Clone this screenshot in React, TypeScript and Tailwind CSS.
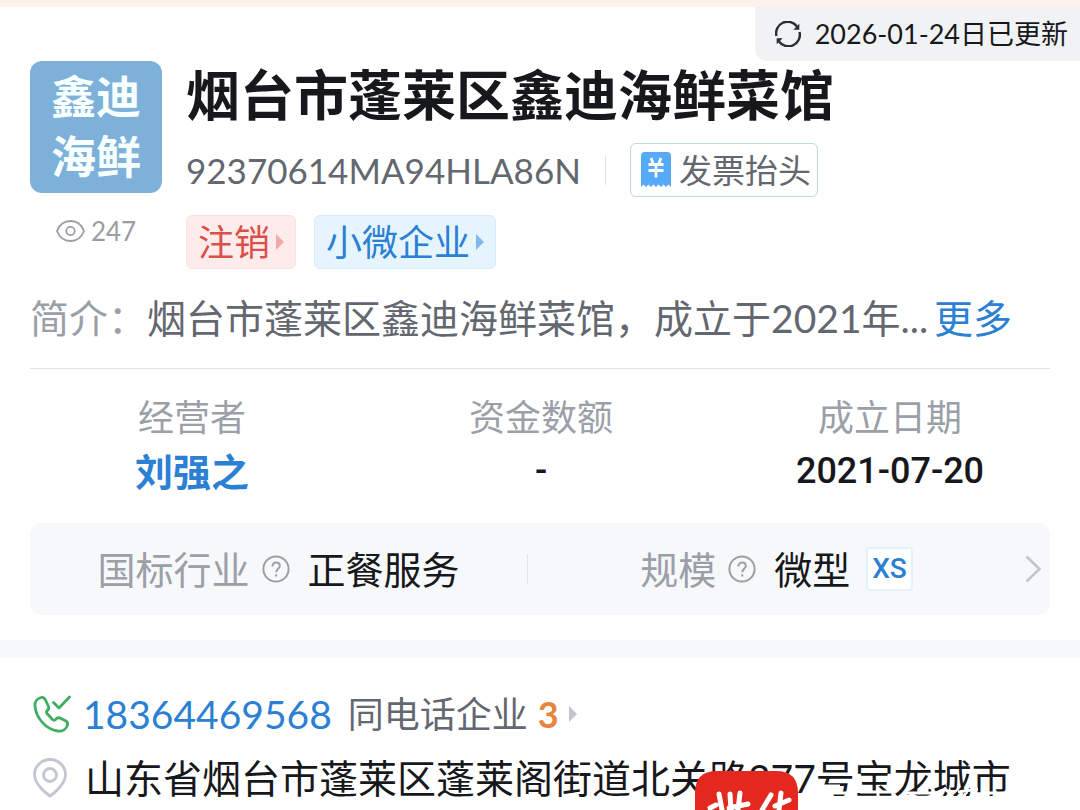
const Arrow = ({ className }: { className: string }) => (
  <svg viewBox="0 0 8 16" className={className} fill="currentColor" aria-hidden="true">
    <path d="M0 0L8 8L0 16Z" />
  </svg>
)

const Help = ({ label }: { label: string }) => (
  <button type="button" aria-label={label} className="text-[#9b9fa8]">
    <svg viewBox="0 0 28 28" className="h-7 w-7" fill="none" stroke="currentColor" strokeWidth="2">
      <circle cx="14" cy="14" r="12.6" />
      <path d="M10.4 11.4C10.4 9 12 7.6 14.1 7.6C16.3 7.6 17.8 9 17.8 11C17.8 13.7 14.2 14 14.2 17.3" />
      <path d="M14.2 19.3V21.5" />
    </svg>
  </button>
)

const Refresh = () => (
  <svg viewBox="0 0 26 26" className="h-[26px] w-[26px]" fill="none" stroke="#2b2d30" strokeWidth="2.4" aria-hidden="true">
    <path d="M1.5 15A11.5 11.5 0 0 1 22 5.5" />
    <path d="M24.5 11A11.5 11.5 0 0 1 4 20.5" />
    <path d="M24.3 2.8V8.8H18.3Z" fill="#2b2d30" stroke="none" />
    <path d="M1.7 23.2V17.2H7.7Z" fill="#2b2d30" stroke="none" />
  </svg>
)

const Eye = () => (
  <svg viewBox="0 0 29 22" className="h-[22px] w-[29px]" fill="none" stroke="currentColor" strokeWidth="1.8" aria-hidden="true">
    <path d="M1 11C3.5 4.5 8.5 1 14.5 1S25.5 4.5 28 11C25.5 17.5 20.5 21 14.5 21S3.5 17.5 1 11Z" />
    <circle cx="14.5" cy="11" r="4.2" />
  </svg>
)

const Invoice = () => (
  <svg viewBox="0 0 30 36" className="h-9 w-[30px]" aria-hidden="true">
    <path d="M4 0H26Q30 0 30 4V35L27.5 32.5L25 35L22.5 32.5L20 35L17.5 32.5L15 35L12.5 32.5L10 35L7.5 32.5L5 35L2.5 32.5L0 35V4Q0 0 4 0Z" fill="#56aaf8" />
    <path d="M10 6L12 11M20 6L18 11M7.5 12.5H22.5M7.5 18.5H22.5M15 12.5V25.5" stroke="#fff" strokeWidth="2.8" fill="none" />
  </svg>
)

const Phone = () => (
  <svg viewBox="0 0 38 38" className="h-[38px] w-[38px]" fill="none" stroke="#3fae60" strokeWidth="2.8" strokeLinecap="round" strokeLinejoin="round" aria-hidden="true">
    <path d="M8 2.5C4.5 3.5 1.5 6.5 2 11C3 23 13 34.5 24.5 36C29.5 36.5 33.5 34 34.5 30C35 28 34 26.5 32.5 25.7L27.5 23.2C25.5 22.2 24 22.8 22.5 24.5C21.5 25.5 20.5 25.3 19.5 24.5L14 18.5C13 17.3 13.3 16.3 14.5 15.3C16 14 16 12.7 15.3 11L12.5 5C11.5 2.7 10 2 8 2.5Z" />
    <path d="M20.5 7.5L26 13L36.5 2" />
  </svg>
)

const Pin = () => (
  <svg viewBox="0 0 34 40" className="h-10 w-[34px]" fill="none" stroke="#c2c6d0" strokeWidth="2.8" aria-hidden="true">
    <path d="M17 38C14 36 1.5 26.5 1.5 16.5A15.5 15 0 0 1 32.5 16.5C32.5 26.5 20 36 17 38Z" />
    <circle cx="17" cy="17" r="6.5" />
  </svg>
)

const Chevron = () => (
  <svg viewBox="0 0 17 28" className="h-7 w-[17px]" fill="none" stroke="currentColor" strokeWidth="2.6" aria-hidden="true">
    <path d="M1.5 1.5L14.5 14L1.5 26.5" />
  </svg>
)

const Summary = () => (
  <section className="flex px-[30px] pt-[54px]">
    <div className="flex w-[132px] shrink-0 flex-col items-center">
      <div className="flex h-[132px] w-full flex-col items-center justify-center rounded-xl bg-[#7db1d9] text-[45px] font-bold leading-[60px] text-[#f8ffff]">
        <span>鑫迪</span>
        <span>海鲜</span>
      </div>
      <div className="mt-[22px] flex items-center gap-1.5 text-[26px] leading-8 text-[#9a9da3]">
        <Eye />
        <span>247</span>
      </div>
    </div>
    <div className="ml-6 min-w-0">
      <h1 className="text-[54px] font-bold leading-[70px] text-[#17181b]">烟台市蓬莱区鑫迪海鲜菜馆</h1>
      <div className="mt-3 flex items-center">
        <span className="text-[35px] leading-[54px] text-[#63676f]">92370614MA94HLA86N</span>
        <span className="ml-6 h-[30px] w-px bg-[#dfe2e6]" />
        <button type="button" className="ml-6 flex h-[54px] items-center gap-2 rounded-md border border-[#bcdcdf] pl-2.5 pr-1.5 text-[33px] leading-[44px] text-[#63676f]">
          <Invoice />
          发票抬头
        </button>
      </div>
      <div className="mt-[18px] flex gap-[18px] text-[36px] leading-[52px]">
        <a href="#status" className="flex h-[54px] items-center gap-1.5 rounded-md border border-[#fbe2e1] bg-[#fdeceb] px-[11px] text-[#db4f48]">
          注销
          <Arrow className="h-4 w-2 text-[#f2aaa7]" />
        </a>
        <a href="#size" className="flex h-[54px] items-center gap-1.5 rounded-md border border-[#d8eafb] bg-[#e6f4fe] px-[11px] text-[#2b80d3]">
          小微企业
          <Arrow className="h-4 w-2 text-[#80b9ef]" />
        </a>
      </div>
    </div>
  </section>
)

const facts = [
  { label: '经营者', value: '刘强之', link: true },
  { label: '资金数额', value: '-', link: false },
  { label: '成立日期', value: '2021-07-20', link: false },
]

const Facts = () => (
  <dl className="mx-[30px] flex justify-between border-t border-[#e2e3e5] pl-0.5 pt-[21px] text-center">
    {facts.map((fact) => (
      <div key={fact.label} className="w-[320px]">
        <dt className="text-[36px] leading-[54px] text-[#9b9fa8]">{fact.label}</dt>
        <dd className="text-[38px] leading-[54px] text-[#17181b]">
          {fact.link ? (
            <a href="#person" className="font-bold text-[#2b80d3]">{fact.value}</a>
          ) : (
            <span className="block font-[Roboto] text-[36px] font-medium">{fact.value}</span>
          )}
        </dd>
      </div>
    ))}
  </dl>
)

const Industry = () => (
  <section className="mx-[30px] mt-[25px] flex h-[92px] items-center rounded-xl bg-[#f7f8fa] text-[38px] leading-[54px] text-[#17181b]">
    <div className="flex flex-1 items-center justify-center">
      <span className="mr-3 text-[#9b9fa8]">国标行业</span>
      <Help label="国标行业说明" />
      <span className="ml-[18px]">正餐服务</span>
    </div>
    <span className="h-[30px] w-px bg-[#dfe2e6]" />
    <div className="flex flex-1 items-center justify-center">
      <span className="mr-3 text-[#9b9fa8]">规模</span>
      <Help label="规模说明" />
      <span className="ml-[18px] mr-4">微型</span>
      <span className="rounded border-2 border-[#e3f2fd] bg-white px-1 font-[Roboto] text-[28px] font-medium leading-10 text-[#2b80d3]">XS</span>
    </div>
    <button type="button" aria-label="查看行业详情" className="mr-2 text-[#c2c5cc]">
      <Chevron />
    </button>
  </section>
)

const Contact = () => (
  <section className="px-[33px] pt-[29px]">
    <div className="flex items-center leading-[54px]">
      <Phone />
      <a href="tel:18364469568" className="ml-3 text-[39px] text-[#2b80d3]">18364469568</a>
      <a href="#same-phone" className="ml-4 flex items-center text-[36px] text-[#63676f]">
        同电话企业
        <span className="ml-2.5 font-bold text-[#e8843c]">3</span>
        <Arrow className="ml-2.5 h-4 w-2 text-[#c2c5cc]" />
      </a>
    </div>
    <address className="mt-2.5 flex items-center text-[39px] not-italic leading-[54px] text-[#17181b]">
      <Pin />
      <span className="ml-[18px] whitespace-nowrap">山东省烟台市蓬莱区蓬莱阁街道北关路277号宝龙城市</span>
    </address>
  </section>
)

// Platform stamp that floats over the bottom edge of the page
const Stamp = () => (
  <div className="absolute bottom-0 right-[62px] flex gap-5">
    <svg viewBox="0 0 103 39" className="h-[39px] w-[103px]" aria-hidden="true">
      <path d="M0 39V22Q0 0 22 0H81Q103 0 103 22V39Z" fill="#e5281f" />
      <path d="M24 23L27 39M15 37L21 34M35 23L36 39M34 37L53 33M45 22L43 39M67 39L76 24M80 35L94 29M86 22L84 39" fill="none" stroke="#fff" strokeWidth="5" strokeLinecap="round" />
    </svg>
    <svg viewBox="0 0 200 39" className="h-[39px] w-[200px]" aria-hidden="true">
      <path d="M0 15H22M14 22H34M42 21H76M60 18V26M88 22H118M126 17L134 24M140 21L160 18M166 22H196M150 15L146 26" fill="none" stroke="#fff" strokeWidth="3" />
      <path d="M0 25H200V39H0Z" fill="#fff" />
    </svg>
  </div>
)

const App = () => {
  return (
    <main className="relative h-screen overflow-hidden bg-white font-[Lato,'Noto_Sans_CJK_SC',sans-serif]">
      <div className="h-[7px] bg-[#fff2ec]" />
      <div className="absolute right-0 top-[7px] flex h-[54px] items-center gap-3.5 rounded-bl-xl bg-[#f1f2f4] pl-5 pr-3 text-[27px] leading-10 text-[#17181b]">
        <Refresh />
        <span>2026-01-24日已更新</span>
      </div>
      <Summary />
      <p className="mx-[30px] mb-[23px] mt-[22px] flex whitespace-nowrap text-[39px] leading-[54px] text-[#63676f]">
        <span className="text-[#9b9fa8]">简介：</span>
        <span>烟台市蓬莱区鑫迪海鲜菜馆，成立于2021年...</span>
        <a href="#more" className="ml-1.5 text-[#2b80d3]">更多</a>
      </p>
      <Facts />
      <Industry />
      <div className="mt-[25px] h-[18px] bg-[#f7f8fa]" />
      <Contact />
      <Stamp />
    </main>
  )
}

export default App
